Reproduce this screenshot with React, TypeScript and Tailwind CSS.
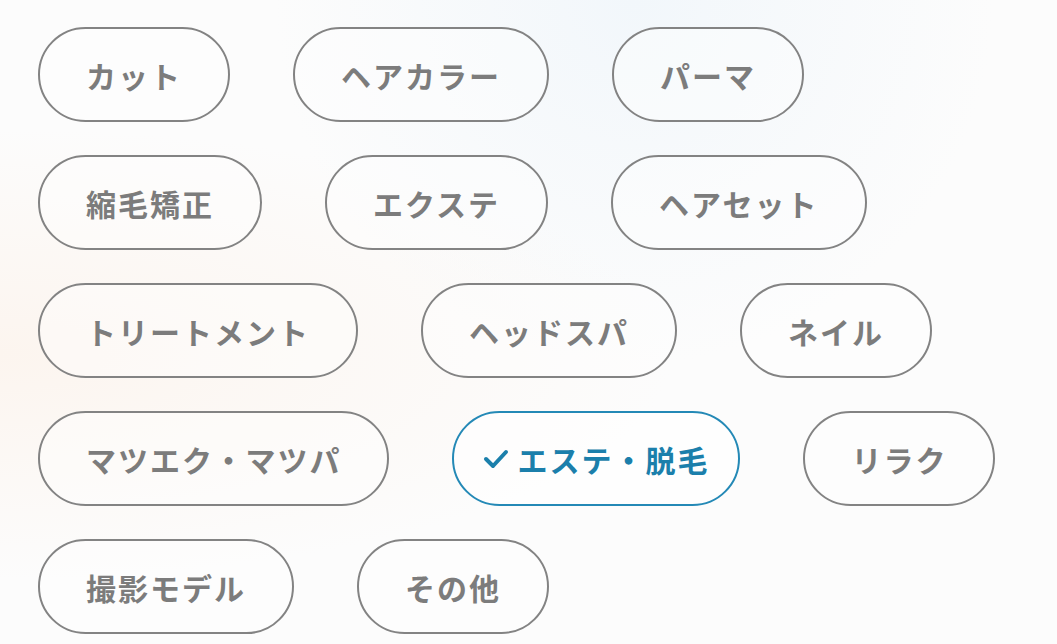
import React from "react";

const rows: string[][] = [
  ["カット", "ヘアカラー", "パーマ"],
  ["縮毛矯正", "エクステ", "ヘアセット"],
  ["トリートメント", "ヘッドスパ", "ネイル"],
  ["マツエク・マツパ", "エステ・脱毛", "リラク"],
  ["撮影モデル", "その他"],
];

const selected = "エステ・脱毛";

const Chip = ({ label }: { label: string }) => {
  const active = label === selected;
  return (
    <button
      type="button"
      className={
        active
          ? "h-[95px] shrink-0 rounded-full border-2 border-[#2489b6] bg-white/60 px-[29px] flex items-center gap-[8px] text-[30px] font-bold tracking-[2px] text-[#1b7fab]"
          : "h-[95px] shrink-0 rounded-full border-2 border-[#838383] bg-white/40 px-[46px] flex items-center text-[30px] font-bold tracking-[2px] text-[#7c7c7c]"
      }
    >
      {active && (
        <svg width="26" height="20" viewBox="0 0 26 20" className="shrink-0">
          <polyline
            points="3,10 10,17 23,3"
            fill="none"
            stroke="#1b7fab"
            strokeWidth="4"
            strokeLinecap="round"
            strokeLinejoin="round"
          />
        </svg>
      )}
      <span className="leading-none">{label}</span>
    </button>
  );
};

export default function App() {
  return (
    <div
      className="w-[1057px] h-[644px] overflow-hidden bg-[#fcfcfc] bg-[radial-gradient(ellipse_at_0%_55%,#fcf5ef_0%,transparent_45%),radial-gradient(ellipse_at_60%_0%,#f2f7fb_0%,transparent_40%)] pl-[38px] pt-[27px]"
      style={{ fontFamily: '"Noto Sans CJK JP", "Noto Sans", sans-serif' }}
    >
      <div className="flex flex-col gap-[33px]">
        {rows.map((row, i) => (
          <div key={i} className="flex gap-[63px]">
            {row.map((label) => (
              <Chip key={label} label={label} />
            ))}
          </div>
        ))}
      </div>
    </div>
  );
}
